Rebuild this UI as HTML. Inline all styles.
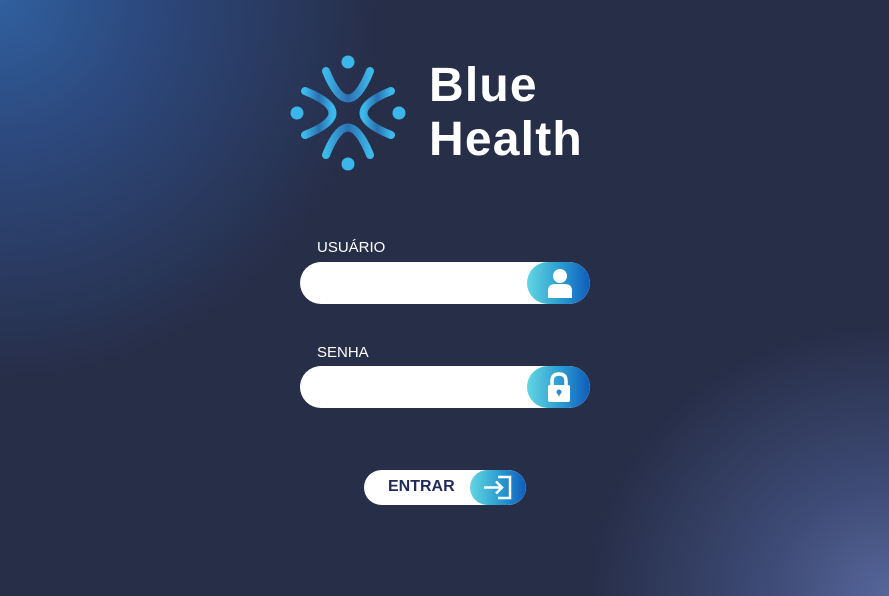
<!DOCTYPE html>
<html><head><meta charset="utf-8"><style>
html,body{margin:0;padding:0}
body{width:889px;height:596px;overflow:hidden;position:relative;font-family:"Liberation Sans",sans-serif;
background:
radial-gradient(ellipse 300px 270px at 889px 596px,#56669a 0%,#3e4b76 40%,rgba(39,46,72,0) 100%),
radial-gradient(ellipse 380px 380px at 0px 0px,#30609e 0%,#2d4a80 35%,rgba(39,46,72,0) 100%),
#272e48;}
.lbl{position:absolute;left:317px;color:#fff;font-size:15px}
.inp{position:absolute;left:300px;width:290px;height:42px;background:#fff;border-radius:21px;overflow:hidden}
.ic{position:absolute;right:0;top:0;width:63px;height:42px;border-radius:21px;background:linear-gradient(90deg,#62d6e2,#2a9ad0 55%,#0e5cbc)}
.title{position:absolute;left:429px;color:#fff;font-weight:bold;font-size:48px;line-height:52px;letter-spacing:1.2px}
</style></head><body>
<svg style="position:absolute;left:0;top:0" width="889" height="596">
<defs><linearGradient id="g" x1="0" y1="0" x2="1" y2="0"><stop offset="0" stop-color="#3db8ea"/><stop offset="0.5" stop-color="#2a70b0"/><stop offset="1" stop-color="#3db8ea"/></linearGradient></defs>
<g fill="#3bb6ea">
<circle cx="348" cy="62" r="6.5"/><circle cx="348" cy="164" r="6.5"/><circle cx="297" cy="113" r="6.5"/><circle cx="399" cy="113" r="6.5"/>
</g>
<g fill="none" stroke="url(#g)" stroke-width="8" stroke-linecap="round">
<path d="M326 71 Q348 126 370 71"/>
<path d="M326 155 Q348 100 370 155"/>
<path d="M305 91 Q360 113 305 135"/>
<path d="M391 91 Q336 113 391 135"/>
</g>
</svg>
<div class="title" style="top:60px">Blue</div>
<div class="title" style="top:114px">Health</div>

<div class="lbl" style="top:239px">USUÁRIO</div>
<div class="inp" style="top:262px"><div class="ic">
<svg width="63" height="42"><circle cx="33" cy="14" r="7" fill="#fff"/><path d="M21 36 V29 Q21 22 28 22 H38 Q45 22 45 29 V36 Z" fill="#fff"/></svg></div></div>

<div class="lbl" style="top:344px">SENHA</div>
<div class="inp" style="top:366px"><div class="ic">
<svg width="63" height="42"><path d="M25 20 V15 Q25 8 32 8 Q39 8 39 15 V20" fill="none" stroke="#fff" stroke-width="3.5"/><rect x="21" y="19" width="22" height="17" rx="2" fill="#fff"/><circle cx="32" cy="26" r="2.5" fill="#2a8ac8"/><path d="M30.5 27 L32 31 L33.5 27Z" fill="#2a8ac8"/></svg></div></div>

<div style="position:absolute;left:364px;top:470px;width:162px;height:35px;background:#fff;border-radius:18px;overflow:hidden">
<div style="position:absolute;left:24px;top:0;line-height:34px;font-weight:bold;font-size:16px;color:#1f2a58">ENTRAR</div>
<div style="position:absolute;right:0;top:0;width:56px;height:35px;border-radius:18px;background:linear-gradient(90deg,#62d6e2,#2a9ad0 55%,#0e5cbc)">
<svg width="56" height="35"><path d="M28 7 H40 V28 H28" fill="none" stroke="#fff" stroke-width="2.5"/><path d="M14 17.5 H32 M26 11.5 L32 17.5 L26 23.5" fill="none" stroke="#fff" stroke-width="2.5"/></svg></div></div>
</body></html>
